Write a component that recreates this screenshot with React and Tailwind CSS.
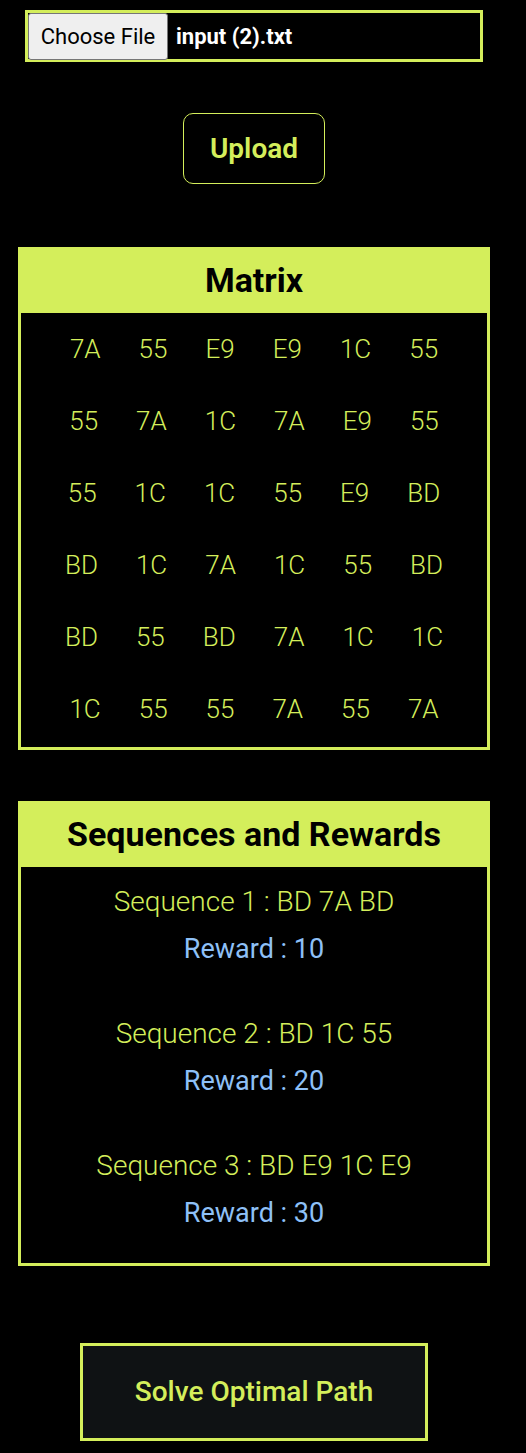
import React from "react";

const matrix = [
  ["7A", "55", "E9", "E9", "1C", "55"],
  ["55", "7A", "1C", "7A", "E9", "55"],
  ["55", "1C", "1C", "55", "E9", "BD"],
  ["BD", "1C", "7A", "1C", "55", "BD"],
  ["BD", "55", "BD", "7A", "1C", "1C"],
  ["1C", "55", "55", "7A", "55", "7A"],
];

const seqs = [
  { s: "Sequence 1 : BD 7A BD", r: 10 },
  { s: "Sequence 2 : BD 1C 55", r: 20 },
  { s: "Sequence 3 : BD E9 1C E9", r: 30 },
];

export default function App() {
  return (
    <div
      className="min-h-[1453px] w-full bg-black"
      style={{ fontFamily: "Roboto, 'Noto Sans', sans-serif" }}
    >
      <div className="flex w-[508px] flex-col items-center pt-[10px] pb-[12px]">
        {/* file input */}
        <div className="flex h-[52px] w-[458px] items-center border-[3px] border-[#d4ee5b]">
          <div className="flex h-[47px] w-[140px] items-center justify-center rounded-[3px] border border-[#767676] bg-[#efefef] text-[22px] font-normal text-black">
            Choose File
          </div>
          <span className="ml-[8px] text-[22px] font-bold text-white">input (2).txt</span>
        </div>

        {/* upload */}
        <button className="mt-[51px] flex h-[71px] w-[142px] items-center justify-center rounded-[10px] border border-[#d4ee5b] bg-black text-[28px] font-semibold text-[#d4ee5b]">
          Upload
        </button>

        {/* matrix */}
        <div className="mt-[63px] w-[472px] border-[3px] border-[#d4ee5b]">
          <div className="flex h-[63px] items-center justify-center bg-[#d4ee5b] pb-[2px] text-[34px] font-bold text-black">
            Matrix
          </div>
          <div className="pb-[2px]">
            {matrix.map((row, i) => (
              <div key={i} className="flex h-[72px] items-center justify-center gap-[38px] text-[26px] font-light text-[#d4ee5b]">
                {row.map((c, j) => (
                  <span key={j}>{c}</span>
                ))}
              </div>
            ))}
          </div>
        </div>

        {/* sequences */}
        <div className="mt-[51px] w-[472px] border-[3px] border-[#d4ee5b]">
          <div className="flex h-[63px] items-center justify-center bg-[#d4ee5b] pb-[2px] text-[34px] font-bold text-black">
            Sequences and Rewards
          </div>
          {seqs.map((q, i) => (
            <div key={i} className="flex h-[132px] flex-col items-center pt-[17px]">
              <div className="flex h-[36px] items-center text-[28px] font-light text-[#d4ee5b]">{q.s}</div>
              <div className="mt-[11px] flex h-[36px] items-center text-[27px] font-normal text-[#8ec0f7]">
                Reward : {q.r}
              </div>
            </div>
          ))}
        </div>

        {/* solve */}
        <button className="mt-[77px] flex h-[98px] w-[348px] items-center justify-center border-[3px] border-[#d4ee5b] bg-[#0f1214] text-[28px] font-medium text-[#d4ee5b]">
          Solve Optimal Path
        </button>
      </div>
    </div>
  );
}
